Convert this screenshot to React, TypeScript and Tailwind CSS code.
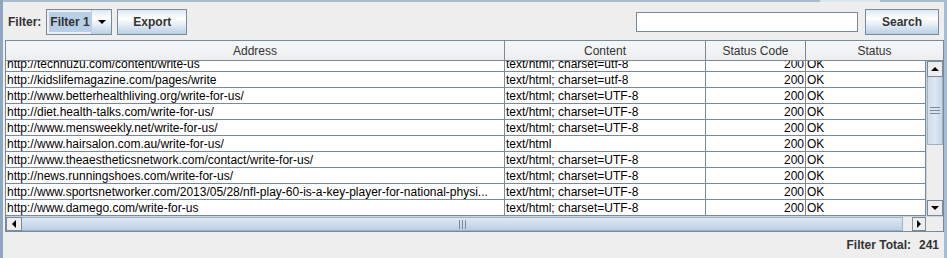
import React from 'react'

const rows: [string, string][] = [
  ['http://technuzu.com/content/write-us', 'text/html; charset=utf-8'],
  ['http://kidslifemagazine.com/pages/write', 'text/html; charset=utf-8'],
  ['http://www.betterhealthliving.org/write-for-us/', 'text/html; charset=UTF-8'],
  ['http://diet.health-talks.com/write-for-us/', 'text/html; charset=UTF-8'],
  ['http://www.mensweekly.net/write-for-us/', 'text/html; charset=UTF-8'],
  ['http://www.hairsalon.com.au/write-for-us/', 'text/html'],
  ['http://www.theaestheticsnetwork.com/contact/write-for-us/', 'text/html; charset=UTF-8'],
  ['http://news.runningshoes.com/write-for-us/', 'text/html; charset=UTF-8'],
  ['http://www.sportsnetworker.com/2013/05/28/nfl-play-60-is-a-key-player-for-national-physi...', 'text/html; charset=UTF-8'],
  ['http://www.damego.com/write-for-us', 'text/html; charset=UTF-8'],
]

const font = { fontFamily: '"Liberation Sans", Arial, sans-serif' }

function Arrow({ dir }: { dir: 'up' | 'down' | 'left' | 'right' }) {
  const pts = {
    up: '0,4 8,4 4,0',
    down: '0,0 8,0 4,4',
    left: '4,0 4,8 0,4',
    right: '0,0 0,8 4,4',
  }[dir]
  const vert = dir === 'up' || dir === 'down'
  return (
    <svg width={vert ? 8 : 4} height={vert ? 4 : 8} viewBox={vert ? '0 0 8 4' : '0 0 4 8'}>
      <polygon points={pts} fill="#000" />
    </svg>
  )
}

function MetalButton({ label, className }: { label: string; className: string }) {
  return (
    <div
      className={`flex h-[26px] items-center justify-center border border-[#7a8a99] bg-[linear-gradient(#dde8f3_0%,#ffffff_35%,#e6eef6_60%,#b8cfe5_100%)] text-[12px] font-bold text-[#333333] ${className}`}
    >
      {label}
    </div>
  )
}

export default function App() {
  return (
    <div
      className="flex h-[258px] w-[947px] flex-col overflow-hidden border-l-[3px] border-r-[3px] border-l-[#8fa8c0] border-r-[#a9bdd0] bg-[#eeeeee] text-[12px]"
      style={font}
    >
      {/* tab strip edge */}
      <div className="flex h-[2px] shrink-0">
        <div className="w-[817px] bg-[#a9bdd0]" />
        <div className="w-[60px] bg-[#dce6f0]" />
        <div className="flex-1 bg-[#a9bdd0]" />
      </div>

      {/* toolbar */}
      <div className="mt-[7px] flex h-[26px] shrink-0 items-center pl-[5px] pr-[5px]">
        <span className="font-bold text-[#333333]">Filter:</span>
        <div className="ml-[5px] flex h-[26px] w-[66px] border border-[#7a8a99] bg-[#eeeeee]">
          <div className="m-[2px] mr-0 flex flex-1 items-center bg-[#b8cfe5] pl-[1px] font-bold text-[#333333]">Filter 1</div>
          <div className="flex w-[20px] items-center justify-center border-l border-[#b8cfe5] bg-[linear-gradient(#dde8f3_0%,#ffffff_35%,#e6eef6_60%,#b8cfe5_100%)]">
            <Arrow dir="down" />
          </div>
        </div>
        <MetalButton label="Export" className="ml-[5px] w-[70px]" />
        <div className="flex-1" />
        <div className="h-[20px] w-[222px] border border-[#7a8a99] bg-white" />
        <MetalButton label="Search" className="ml-[7px] w-[74px]" />
      </div>

      {/* table */}
      <div className="ml-[2px] mt-[5px] flex h-[192px] w-[939px] shrink-0 flex-col border border-[#7a8a99] bg-white">
        {/* header */}
        <div className="flex h-[20px] shrink-0 border-b border-[#7a8a99] bg-[linear-gradient(#f4f7fa,#eeeeee)] text-[#333333]">
          <div className="flex w-[499px] items-center justify-center border-r border-[#7a8a99]">Address</div>
          <div className="flex w-[201px] items-center justify-center border-r border-[#7a8a99]">Content</div>
          <div className="flex w-[100px] items-center justify-center border-r border-[#7a8a99]">Status Code</div>
          <div className="flex flex-1 items-center justify-center">Status</div>
        </div>

        {/* body */}
        <div className="flex h-[155px] shrink-0">
          <div className="w-[921px] overflow-hidden">
            <div className="-mt-[5px]">
              {rows.map(([addr, content], i) => (
                <div key={i} className="flex h-[16px] border-b border-[#7a8a99] leading-[16px] text-black">
                  <div className="w-[499px] overflow-hidden whitespace-nowrap border-r border-[#7a8a99] pl-[1px]">{addr}</div>
                  <div className="w-[201px] overflow-hidden whitespace-nowrap border-r border-[#7a8a99] pl-[1px]">{content}</div>
                  <div className="w-[100px] border-r border-[#7a8a99] pr-[1px] text-right">200</div>
                  <div className="flex-1 border-r border-[#7a8a99] pl-[1px]">OK</div>
                </div>
              ))}
            </div>
          </div>
          {/* vertical scrollbar */}
          <div className="flex w-[17px] flex-col border-l border-[#c8d4df] bg-[#eeeeee]">
            <div className="flex h-[16px] items-center justify-center border border-[#7a8a99] bg-[#eeeeee]">
              <Arrow dir="up" />
            </div>
            <div className="flex h-[68px] items-center justify-center border-x border-b border-[#9fb2c4] bg-[linear-gradient(90deg,#cfdcea,#dde8f3,#c5d6e8)]">
              <svg width="10" height="7" viewBox="0 0 10 7">
                <line x1="0" y1="0.5" x2="10" y2="0.5" stroke="#7a8a99" />
                <line x1="0" y1="3.5" x2="10" y2="3.5" stroke="#7a8a99" />
                <line x1="0" y1="6.5" x2="10" y2="6.5" stroke="#7a8a99" />
              </svg>
            </div>
            <div className="flex-1" />
            <div className="flex h-[16px] items-center justify-center border border-[#7a8a99] bg-[#eeeeee]">
              <Arrow dir="down" />
            </div>
          </div>
        </div>

        {/* horizontal scrollbar */}
        <div className="flex h-[15px] shrink-0 border-t border-[#c8d4df] bg-[#eeeeee]">
          <div className="flex w-[16px] items-center justify-center border border-[#7a8a99]">
            <Arrow dir="left" />
          </div>
          <div className="flex w-[881px] items-center justify-center border-y border-r border-[#9fb2c4] bg-[linear-gradient(#dde8f3,#c9daeb_60%,#b8cfe5)]">
            <svg width="7" height="9" viewBox="0 0 7 9">
              <line x1="0.5" y1="0" x2="0.5" y2="9" stroke="#7a8a99" />
              <line x1="3.5" y1="0" x2="3.5" y2="9" stroke="#7a8a99" />
              <line x1="6.5" y1="0" x2="6.5" y2="9" stroke="#7a8a99" />
            </svg>
          </div>
          <div className="flex-1" />
          <div className="flex w-[14px] items-center justify-center border border-[#7a8a99]">
            <Arrow dir="right" />
          </div>
          <div className="w-[17px] bg-[#eeeeee]" />
        </div>
      </div>

      {/* footer */}
      <div className="flex h-[27px] items-center justify-end pr-[5px] font-bold text-[#333333]">
        <span>Filter Total:</span>
        <span className="ml-[8px]">241</span>
      </div>
    </div>
  )
}
